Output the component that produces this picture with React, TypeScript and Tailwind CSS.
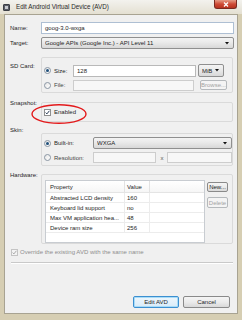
import React from "react";

function Radio({ on }: { on?: boolean }) {
  return (
    <div className="w-[7px] h-[7px] rounded-full border border-[#8a96a3] bg-linear-to-br from-[#e6e6e6] to-white flex items-center justify-center shrink-0">
      {on && <div className="w-[3px] h-[3px] rounded-full bg-[#1f4f7a]" />}
    </div>
  );
}

function Check({ disabled }: { disabled?: boolean }) {
  return (
    <div
      className={
        "w-[7px] h-[7px] border flex items-center justify-center shrink-0 " +
        (disabled ? "border-[#c4c4c4] bg-[#f4f4f4]" : "border-[#8e8f8f] bg-white")
      }
    >
      <svg width="5" height="5" viewBox="0 0 5 5">
        <path
          d="M0.6 2.6 L1.9 3.9 L4.4 0.8"
          fill="none"
          stroke={disabled ? "#a8a8a8" : "#2a3d57"}
          strokeWidth="1"
        />
      </svg>
    </div>
  );
}

function Arrow() {
  return (
    <svg width="4" height="3" viewBox="0 0 4 3" className="shrink-0">
      <path d="M0 0 H4 L2 2.5 Z" fill="#111" />
    </svg>
  );
}

function Combo({ text, cls }: { text: string; cls: string }) {
  return (
    <div
      className={
        "flex items-center border border-[#8f8f8f] rounded-[2px] bg-linear-to-b from-[#f4f4f4] via-[#e8e8e8] to-[#d8d8d8] pl-[3px] pr-[4px] " +
        cls
      }
    >
      <span className="flex-1 truncate">{text}</span>
      <Arrow />
    </div>
  );
}

function Btn({ text, cls, disabled, def }: { text: string; cls: string; disabled?: boolean; def?: boolean }) {
  return (
    <div
      className={
        "flex items-center justify-center rounded-[2px] border " +
        (disabled
          ? "border-[#b5b9bc] bg-[#f4f4f4] text-[#a3a3a3] "
          : def
          ? "border-[#3c8fd0] bg-linear-to-b from-[#eef6fc] to-[#d9ecf9] text-[#1e1e1e] shadow-[inset_0_0_0_1px_#a8dcf8] "
          : "border-[#8a8a8a] bg-linear-to-b from-[#f5f5f5] via-[#ebebeb] to-[#d9d9d9] text-[#1e1e1e] ") +
        cls
      }
    >
      {text}
    </div>
  );
}

const rows: [string, string][] = [
  ["Abstracted LCD density", "160"],
  ["Keyboard lid support", "no"],
  ["Max VM application hea...", "48"],
  ["Device ram size", "256"],
];

export default function App() {
  return (
    <div className="relative w-[242px] h-[320px] overflow-hidden bg-[#d6ceb3] flex flex-col text-[6px] leading-[8px] text-[#1e1e1e] font-['Liberation_Sans',Arial,sans-serif]">
      {/* title bar */}
      <div className="h-[14px] flex items-start bg-linear-to-b from-[#f3f2ee] to-[#e4e0d2] shrink-0">
        <div className="ml-[3px] mt-[4px] w-[7px] h-[7px] rounded-[1px] bg-[#5a5d66] border border-[#3c3f46] flex items-center justify-center">
          <div className="w-[3px] h-[3px] bg-[#c9ccd2]" />
        </div>
        <div className="ml-[6px] mt-[3px] text-[6.3px] text-[#2a2a2a]">Edit Android Virtual Device (AVD)</div>
        <div className="flex-1" />
        <div className="mr-[5px] w-[23px] h-[9px] rounded-b-[3px] border border-t-0 border-[#7a2a22] bg-linear-to-b from-[#e49a86] via-[#cf4a36] to-[#b7321f] flex items-center justify-center">
          <svg width="6" height="5" viewBox="0 0 6 5">
            <path d="M1 0.5 L5 4.5 M5 0.5 L1 4.5" stroke="white" strokeWidth="1.3" />
          </svg>
        </div>
      </div>

      {/* body */}
      <div className="mx-[4px] w-[234px] h-[300px] bg-[#f0f0f0] border border-[#a8a392] flex flex-col pt-[7px] shrink-0">
        {/* Name */}
        <div className="flex items-center h-[12px]">
          <div className="w-[36px] pl-[5px]">Name:</div>
          <div className="w-[193px] h-[12px] bg-white border border-[#aebfd3] flex items-center pl-[3px]">goog-3.0-wxga</div>
        </div>
        {/* Target */}
        <div className="flex items-center h-[12px] mt-[3px]">
          <div className="w-[36px] pl-[5px]">Target:</div>
          <Combo text="Google APIs (Google Inc.) - API Level 11" cls="w-[193px] h-[12px]" />
        </div>

        {/* SD Card */}
        <div className="flex items-start mt-[8px]">
          <div className="w-[36px] pl-[5px] mt-[5px]">SD Card:</div>
          <div className="w-[192px] h-[36px] border border-[#dadada] rounded-[2px] flex flex-col pt-[6px]">
            <div className="flex items-center h-[13px]">
              <div className="ml-[2px]"><Radio on /></div>
              <div className="ml-[3px] w-[19px]">Size:</div>
              <div className="w-[123px] h-[12px] bg-white border border-[#b9b9b9] flex items-center pl-[3px]">128</div>
              <Combo text="MiB" cls="ml-[2px] w-[26px] h-[13px]" />
            </div>
            <div className="flex items-center h-[12px] mt-[2px]">
              <div className="ml-[2px]"><Radio /></div>
              <div className="ml-[3px] w-[19px] text-[#444]">File:</div>
              <div className="w-[121px] h-[11px] bg-[#f7f7f7] border border-[#cdcdcd]" />
              <Btn text="Browse..." disabled cls="ml-[6px] w-[27px] h-[10px]" />
            </div>
          </div>
        </div>

        {/* Snapshot */}
        <div className="flex items-start mt-[9px]">
          <div className="w-[36px] pl-[5px] mt-[-3px]">Snapshot:</div>
          <div className="w-[192px] h-[20px] border border-[#dadada] rounded-[2px] flex items-center">
            <div className="ml-[2px]"><Check /></div>
            <div className="ml-[3px]">Enabled</div>
          </div>
        </div>

        {/* Skin */}
        <div className="flex items-start mt-[11px]">
          <div className="w-[36px] pl-[5px] mt-[-7px]">Skin:</div>
          <div className="w-[192px] h-[33px] border border-[#dadada] rounded-[2px] flex flex-col pt-[3px]">
            <div className="flex items-center h-[12px]">
              <div className="ml-[2px]"><Radio on /></div>
              <div className="ml-[3px] w-[39px]">Built-in:</div>
              <Combo text="WXGA" cls="w-[139px] h-[12px]" />
            </div>
            <div className="flex items-center h-[11px] mt-[3px]">
              <div className="ml-[2px]"><Radio /></div>
              <div className="ml-[3px] w-[39px] text-[#444]">Resolution:</div>
              <div className="w-[64px] h-[11px] bg-[#f7f7f7] border border-[#cdcdcd]" />
              <div className="w-[11px] text-center text-[#555]">x</div>
              <div className="w-[65px] h-[11px] bg-[#f7f7f7] border border-[#cdcdcd]" />
            </div>
          </div>
        </div>

        {/* Hardware */}
        <div className="flex items-start mt-[8px]">
          <div className="w-[36px] pl-[5px] mt-[-3px]">Hardware:</div>
          <div className="w-[192px] h-[70px] border border-[#dadada] rounded-[2px] flex items-start pt-[5px]">
            <div className="ml-[3px] w-[160px] h-[63px] bg-white border border-[#c8ccd1] flex flex-col">
              <div className="flex h-[12px] items-center border-b border-[#e4e4e4] bg-linear-to-b from-white to-[#f6f6f6]">
                <div className="w-[79px] pl-[4px] border-r border-[#e2e2e2] h-full flex items-center">Property</div>
                <div className="w-[25px] pl-[2px] border-r border-[#e2e2e2] h-full flex items-center">Value</div>
              </div>
              {rows.map(([p, v]) => (
                <div key={p} className="flex h-[10px] items-center border-b border-[#ececec]">
                  <div className="w-[79px] pl-[4px] border-r border-[#ececec] h-full flex items-center whitespace-nowrap overflow-hidden">{p}</div>
                  <div className="w-[25px] pl-[2px] border-r border-[#ececec] h-full flex items-center">{v}</div>
                </div>
              ))}
            </div>
            <div className="ml-[2px] mt-[2px] flex flex-col gap-[5px]">
              <Btn text="New..." cls="w-[21px] h-[10px]" />
              <Btn text="Delete" disabled cls="w-[21px] h-[11px]" />
            </div>
          </div>
        </div>

        {/* Override */}
        <div className="flex items-center mt-[4px] h-[8px] pl-[6px]">
          <Check disabled />
          <div className="ml-[2px] text-[#8e8e8e]">Override the existing AVD with the same name</div>
        </div>

        <div className="mt-[6px] ml-[6px] w-[222px] h-[2px] border-t border-[#c9c9c9] border-b border-b-white" />

        <div className="mt-[32px] flex justify-end pr-[7px] gap-[4px]">
          <Btn text="Edit AVD" def cls="w-[46px] h-[12px]" />
          <Btn text="Cancel" cls="w-[47px] h-[12px]" />
        </div>
      </div>

      {/* red annotation ellipse */}
      <svg className="absolute left-[30px] top-[103px] pointer-events-none" width="58" height="22" viewBox="0 0 58 22">
        <ellipse cx="29" cy="11" rx="27" ry="9.3" fill="none" stroke="#e3191b" strokeWidth="1.4" />
      </svg>
    </div>
  );
}
